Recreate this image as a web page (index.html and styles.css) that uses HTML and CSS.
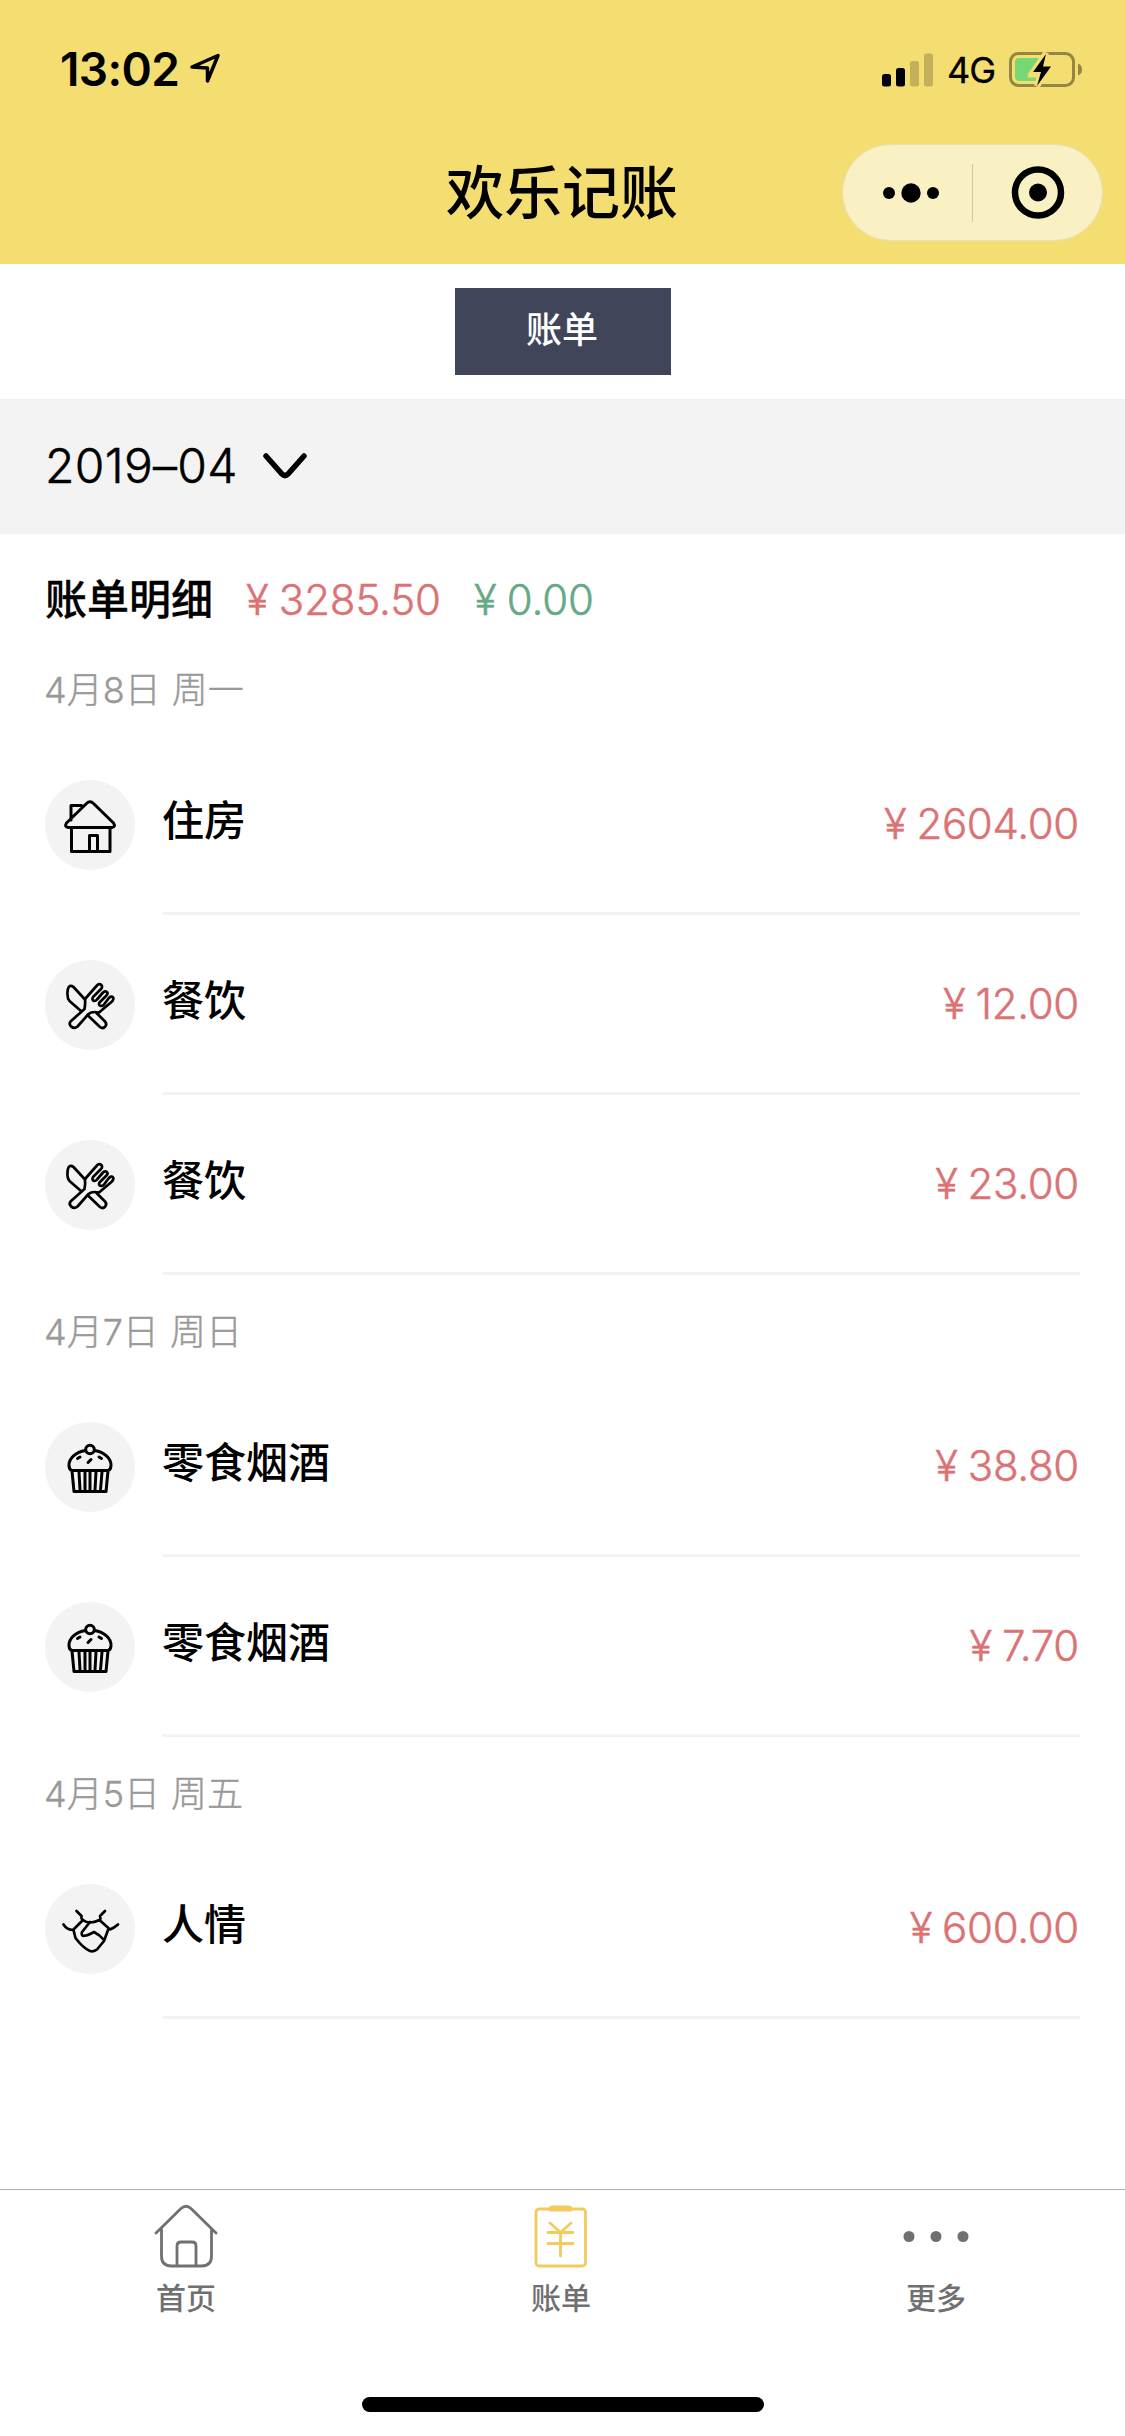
FILE: index.html
```html
<!DOCTYPE html>
<html lang="zh-CN">
<head>
<meta charset="utf-8">
<title>欢乐记账</title>
<link rel="stylesheet" href="styles.css">
</head>
<body>
<svg class="sprite" width="0" height="0">
  <symbol id="house" viewBox="0 0 90 90">
    <path d="M26 40V25.500H36.500M26.500 48V71.500H65V48M44.500 71V55.500H52.500V71M41.500 23.500Q45 20 48.500 23.500L68.500 43Q71 47 67 47.500H23.500Q19 47 21.500 43Z"/>
  </symbol>
  <symbol id="meal" viewBox="0 0 90 90">
    <path d="M40 39.500L28.500 27Q23 23.500 22.500 32Q22 38 24.500 41L36 51M43.500 56L55 67C59 70 63 65 60 61.500L51.500 53"/>
    <path d="M40 39L51.500 26C55 22 59 26 56 29L48 37C46 41 50 42 52 39.500L58 32.500C61 30 64 32.500 61.500 35.500L54.500 42.500C52.500 46 57 47 59 44.500L63.500 38.500C67 34 70 38 67 41.500L54 52.500Q47 51 43.500 54L32.500 66.500C28 70 23 65 25.500 61.500L39.500 49Q40.500 44 40 39Z"/>
  </symbol>
  <symbol id="cake" viewBox="0 0 90 90">
    <circle cx="45" cy="27.500" r="4.300"/>
    <path d="M40.500 28.500C31 30 23.500 36 24 44Q24.500 48 27 48.500H63Q65.500 48 66 44C66.500 36 59 30 49.500 28.500M27 49L29 69.500H61L63 49M34 50L35 68M40 50V68M45 50V68M51 50L50 68M57 50L55.500 68M32.500 36.500L35 35M54 35L56.500 36.500M43 40.500L46 37.500"/>
  </symbol>
  <symbol id="hands" viewBox="0 0 90 90">
    <path d="M31.500 27L36.500 32Q36 35 38 36L28 46Q22 46 18.500 40.500M60 27L55 32Q56 36 54.500 36L65 45.500Q69 44 73 40.500M38 36Q44 41 54.500 36M45 38L37 48C35 54 42 52 49 48Q55 51 59 56M28.500 46L30.500 54Q38 64 45 67Q49 68 52 65.500L59 57L63 46"/>
  </symbol>
</svg>
<header class="header">
  <div class="status">
    <span class="time">13:02</span>
    <svg class="location" width="32" height="32" viewBox="0 0 32 32"><path d="M4 15L30 3.500L19.500 29V16Z"/></svg>
    <svg class="signal" width="52" height="34" viewBox="0 0 52 34"><rect x="0" y="21" width="9" height="12.500" rx="2.500"/><rect x="14" y="15" width="9" height="18.500" rx="2.500"/><g opacity=".2"><rect x="28" y="8" width="9" height="25.500" rx="2.500"/><rect x="42" y="0.500" width="9" height="33" rx="2.500"/></g></svg>
    <span class="network">4G</span>
    <svg class="battery" width="75" height="37" viewBox="0 0 75 37">
      <rect class="shell" x="2.500" y="2.500" width="63" height="32" rx="8"/>
      <path class="nub" d="M70 12.500Q74 14 74 18.500Q74 23 70 24.500Z"/>
      <path class="charge" d="M11 7H32L19 26.500H28V30H11Q7 30 7 26V11Q7 7 11 7Z"/>
      <path class="halo" d="M38 2L25 21H33L29 35L43 15.500H35Z"/>
      <path d="M38 3L25 21H33L29 35L43 15.500H35Z"/>
    </svg>
  </div>
  <div class="navbar">
    <h1 class="title">欢乐记账</h1>
    <div class="capsule">
      <svg width="129" height="95" viewBox="0 1 129 95"><circle cx="46" cy="49" r="6"/><circle cx="68" cy="49" r="9.700"/><circle cx="90" cy="49" r="6"/></svg>
      <span class="split"></span>
      <svg width="129" height="95" viewBox="0 1 129 95"><circle class="ring" cx="65" cy="48.500" r="23"/><circle cx="65" cy="48.500" r="9"/></svg>
    </div>
  </div>
</header>
<main>
  <div class="switch"><span class="switch-button">账单</span></div>
  <div class="month"><span>2019–04</span><svg width="46" height="30" viewBox="0 0 46 30"><path d="M4 4L20 22Q23 25 26 22L42 4"/></svg></div>
  <div class="summary"><strong>账单明细</strong><span class="money out">¥ 3285.50</span><span class="money in">¥ 0.00</span></div>
  <section>
    <h2 class="day">4月8日 周一</h2>
    <div class="row"><svg class="icon"><use href="#house"/></svg><div class="body"><span class="name">住房</span><span class="money out">¥ 2604.00</span></div></div>
    <div class="row"><svg class="icon fine"><use href="#meal"/></svg><div class="body"><span class="name">餐饮</span><span class="money out">¥ 12.00</span></div></div>
    <div class="row"><svg class="icon fine"><use href="#meal"/></svg><div class="body"><span class="name">餐饮</span><span class="money out">¥ 23.00</span></div></div>
  </section>
  <section>
    <h2 class="day">4月7日 周日</h2>
    <div class="row"><svg class="icon"><use href="#cake"/></svg><div class="body"><span class="name">零食烟酒</span><span class="money out">¥ 38.80</span></div></div>
    <div class="row"><svg class="icon"><use href="#cake"/></svg><div class="body"><span class="name">零食烟酒</span><span class="money out">¥ 7.70</span></div></div>
  </section>
  <section>
    <h2 class="day">4月5日 周五</h2>
    <div class="row"><svg class="icon fine"><use href="#hands"/></svg><div class="body"><span class="name">人情</span><span class="money out">¥ 600.00</span></div></div>
  </section>
</main>
<footer class="footer">
  <nav class="tabs">
    <a class="tab"><svg width="66" height="66" viewBox="0 0 66 66"><path d="M3 30L28 5.500Q33 1 38 5.500L63 30M8.500 26V53Q8.500 63 18.500 63H48.500Q58.500 63 58.500 53V26M24 63V43Q24 39 28 39H39Q43 39 43 43V63"/></svg><span>首页</span></a>
    <a class="tab"><svg class="active" width="66" height="66" viewBox="0 0 66 66"><rect x="8" y="6" width="49.500" height="57" rx="3"/><path class="solid" d="M22 7V6Q22 4 25 4H40Q43 4 43 6V7Z"/><path d="M22 20L32.500 29.500L43 20M20 29.500H45M20 40.500H45M32.500 29.500V53"/></svg><span>账单</span></a>
    <a class="tab"><svg class="dots" width="66" height="66" viewBox="0 0 66 66"><circle cx="6" cy="33.500" r="5.500"/><circle cx="33" cy="33.500" r="5.500"/><circle cx="60" cy="33.500" r="5.500"/></svg><span>更多</span></a>
  </nav>
  <div class="home-indicator"></div>
</footer>
</body>
</html>
```
FILE: styles.css
```css
* { box-sizing: border-box; }
body {
  margin: 0;
  width: 1125px;
  height: 2436px;
  display: flex;
  flex-direction: column;
  overflow: hidden;
  background: #fff;
  color: #000;
  font-family: Inter, "Noto Sans CJK SC", sans-serif;
}
svg { display: block; flex: none; }
.sprite { position: absolute; }

.header { height: 264px; background: #f4de71; }
.status { height: 129px; padding: 10px 42px 0 60px; display: flex; align-items: center; }
.time { padding-bottom: 2px; font-size: 46px; font-weight: 600; line-height: 56px; letter-spacing: -0.6px; width: 128px; white-space: nowrap; }
.location { margin-bottom: 3px; fill: none; stroke: #000; stroke-width: 3.500; stroke-linejoin: round; }
.signal { margin-left: auto; }
.network { width: 74px; padding: 1px 0 0 13px; font-size: 36px; font-weight: 400; line-height: 44px; letter-spacing: -1px; -webkit-text-stroke: 0.3px; }
.battery { margin-bottom: 1px; }
.shell { fill: none; stroke: #938544; stroke-width: 3; }
.nub { fill: #938544; }
.charge { fill: #77d873; }
.halo { fill: #f4de71; stroke: #f4de71; stroke-width: 6; }
.navbar { height: 135px; padding: 15px 22px 0 0; display: grid; grid-template-columns: 820px 1fr; align-items: start; }
.title { margin: 2px 0 0; padding-left: 446px; font-size: 58px; line-height: 95px; font-weight: 500; white-space: nowrap; }
.capsule { justify-self: end; width: 261px; height: 97px; display: flex; align-items: center; background: #f9f0c3; border: 1px solid #e6dfb8; border-radius: 49px; }
.split { width: 1px; height: 58px; background: #cfc79d; }
.ring { fill: none; stroke: #000; stroke-width: 6.500; }

.switch { height: 135px; display: flex; justify-content: center; padding: 24px 0 0 1px; }
.switch-button { width: 216px; height: 87px; padding-right: 2px; background: #414559; color: #fff; font-size: 36px; font-weight: 500; line-height: 84px; text-align: center; }
.month { height: 135px; padding: 0 45px; display: flex; align-items: center; gap: 24px; background: #f3f3f3; font-size: 48px; font-weight: 300; letter-spacing: 0.3px; -webkit-text-stroke: 0.5px; }
.month span { padding-bottom: 2px; }
.month svg { fill: none; stroke: #000; stroke-width: 5.500; stroke-linecap: round; }

.summary { height: 99px; padding: 33px 45px 0; display: flex; align-items: center; font-size: 42px; line-height: 66px; }
.summary strong { font-weight: 500; -webkit-text-stroke: 0.3px; }
.summary .money { margin-left: 33px; letter-spacing: -0.1px; }
.money { font-weight: 300; white-space: nowrap; letter-spacing: -0.3px; word-spacing: -1.5px; -webkit-text-stroke: 0.5px; }
.out { color: #db7375; }
.in { color: #65a987; }

.day { margin: 0; height: 102px; padding-left: 44px; color: #999; font-size: 36px; font-weight: 300; line-height: 115px; word-spacing: 1px; -webkit-text-stroke: 0.4px; }
.row { height: 180px; padding: 0 45px; display: flex; align-items: center; gap: 27px; }
.icon { width: 90px; height: 90px; border-radius: 50%; background: #f3f3f3; fill: none; stroke: #000; stroke-width: 3; stroke-linecap: round; stroke-linejoin: round; }
.fine { stroke-width: 2.700; }
.body { flex: 1; height: 180px; padding-right: 1px; border-bottom: 3px solid #f3f3f3; display: flex; align-items: center; justify-content: space-between; font-size: 42px; line-height: 60px; }
.body .money { padding-top: 1px; }
.name { font-weight: 500; padding-bottom: 6px; }

.footer { margin-top: auto; height: 247px; border-top: 1px solid #b2b2b2; display: flex; flex-direction: column; align-items: center; }
.tabs { width: 1125px; height: 207px; display: grid; grid-template-columns: repeat(3, 375px); margin-left: -3px; }
.tab { display: flex; flex-direction: column; align-items: center; padding-top: 13px; color: #707070; font-size: 30px; font-weight: 500; line-height: 44px; }
.tab svg { fill: none; stroke: #707070; stroke-width: 2.800; stroke-linecap: round; stroke-linejoin: round; }
.tab span { margin-top: 7px; }
.tab .active { stroke: #f1cb5b; }
.tab .solid { fill: #f1cb5b; }
.tab .dots { fill: #707070; stroke: none; }
.home-indicator { width: 402px; height: 15px; border-radius: 8px; background: #000; }
```
